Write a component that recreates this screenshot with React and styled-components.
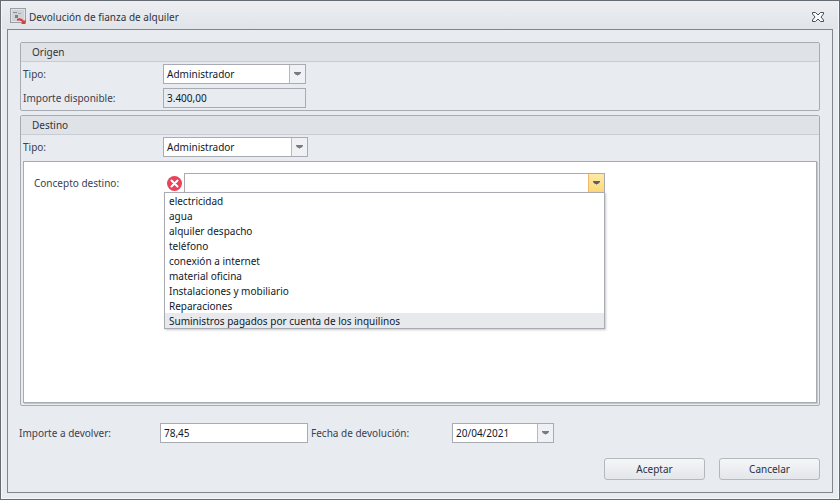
import React from "react";
import styled, { createGlobalStyle } from "styled-components";

const Global = createGlobalStyle`
  html, body { margin: 0; padding: 0; background: #e8ebf0; }
  * { box-sizing: border-box; }
`;

const Win = styled.div`
  width: 840px; height: 500px;
  border: 1px solid #666c73;
  box-shadow: inset 0 0 0 1px #f6f7f9;
  background: #e8ebf0;
  display: flex; flex-direction: column;
  font-family: "Noto Sans", "Liberation Sans", Arial, sans-serif;
  font-size: 10px;
  color: #1b2433;
`;
const TitleBar = styled.div`
  height: 28px; flex: none;
  display: flex; align-items: center;
  padding: 3px 14px 0 8px;
  background: linear-gradient(#eceef2, #e1e4e8);
  margin: 0 1px;
  color: #2f3540;
`;
const TitleText = styled.span`
  margin-left: 2px; flex: 1;
`;
const Frame = styled.div`
  flex: 1; min-height: 0;
  margin: 0 6px 6px;
  border: 1px solid #7f858a;
  padding: 12px 12px 12px;
  display: flex; flex-direction: column;
  background: #e8ebf0;
`;
const Group = styled.section`
  border: 1px solid #a8acb2;
  border-radius: 2px;
  display: flex; flex-direction: column;
  flex: ${p => (p.$grow ? "1" : "none")};
  min-height: 0;
  margin-top: ${p => p.$top || 0}px;
`;
const GroupHead = styled.header`
  height: 19px; flex: none;
  background: #dfe2e7;
  border-bottom: 1px solid #c9ccd2;
  padding-left: 11px;
  line-height: 18px;
  color: #2f3540;
`;
const GroupBody = styled.div`
  flex: 1; min-height: 0;
  padding: 2px 2px;
  display: flex; flex-direction: column;
  gap: 4px;
`;
const Row = styled.div`
  display: flex; align-items: center; height: 20px; flex: none;
`;
const Label = styled.label`
  width: ${p => p.$w}px; flex: none; color: #3a4150;
  margin-left: ${p => p.$left || 0}px;
`;
const Field = styled.div`
  width: ${p => p.$w}px; height: 20px; flex: none;
  border: 1px solid #a8acb2;
  background: ${p => (p.$ro ? "#e8ebf0" : "#fff")};
  display: flex; align-items: stretch;
  color: #10192c;
  position: relative;
`;
const FieldText = styled.span`
  flex: 1; padding-left: 3px; line-height: 18px; white-space: nowrap;
`;
const DropBtn = styled.span`
  width: ${p => p.$w || 16}px; flex: none;
  display: flex; align-items: center; justify-content: center;
  border-left: 1px solid ${p => (p.$hot ? "#f0b765" : "#b6bac0")};
  background: ${p => (p.$hot ? "linear-gradient(#fde9a6, #fdd97a)" : "#eff1f4")};
`;
const Panel = styled.div`
  flex: 1; min-height: 0;
  background: #fff;
  border: 1px solid #a8acb2;
  box-shadow: 1px 1px 0 #c4c7cc;
  padding: 11px 0 0 10px;
`;
const ConceptRow = styled.div`
  display: flex; align-items: center; height: 20px;
`;
const ErrIcon = styled.svg`
  width: 15px; height: 15px; flex: none; margin: 0 2px 0 0;
`;
const Menu = styled.ul`
  position: absolute; left: -21px; top: 18px;
  width: 441px; height: 137px;
  margin: 0; padding: 0;
  list-style: none;
  background: #fff;
  border: 1px solid #a8acb2;
  box-shadow: 1px 1px 2px rgba(90, 95, 105, 0.35);
  z-index: 2;
`;
const MenuItem = styled.li`
  height: 15px; line-height: 14px;
  padding: 1px 0 0 4px;
  color: #10192c;
  background: ${p => (p.$active ? "#e7e9ed" : "transparent")};
`;
const BottomRow = styled.div`
  display: flex; align-items: center; height: 20px; flex: none;
  margin: 17px 0 0 -1px;
`;
const Actions = styled.div`
  display: flex; justify-content: flex-end; gap: 14px;
  margin-top: 15px; flex: none;
`;
const Button = styled.button`
  width: 101px; height: 22px;
  border: 1px solid #b4b8bd;
  border-radius: 3px;
  background: linear-gradient(#f5f6f8, #e3e6ea);
  font: inherit; color: #2a3140; padding: 0;
`;

const Arrow = ({ dark }) => (
  <svg width="7" height="4" viewBox="0 0 7 4">
    <path d="M0 0H7V1L5 3H4L3.500 4L3 3H2L0 1Z" fill={dark ? "#5b6068" : "#777c84"} />
  </svg>
);

const WinIcon = () => (
  <svg width="17" height="17" viewBox="0 0 17 17">
    <rect x="0.5" y="0.5" width="15" height="14" fill="#e2e4e7" stroke="#9a9fa6" />
    <rect x="2" y="2" width="12" height="11" fill="#cfd2d6" />
    <rect x="3" y="4" width="4" height="1" fill="#8a8f96" />
    <rect x="8" y="5" width="3" height="1" fill="#a5a9af" />
    <rect x="5" y="7" width="3" height="3" fill="#7c8087" />
    <path d="M7 11 C9 9.500 12 10 14 13 L15.500 11.500 V16 H11 L12.500 14.500 C11 12.500 9 12 7 13Z" fill="#d83b3b" />
  </svg>
);

const CloseIcon = () => (
  <svg width="12" height="10" viewBox="0 0 12 10">
    <path d="M0.500 0.500H3.500L6 3L8.500 0.500H11.500V2L9 5L11.500 8V9.500H8.500L6 7L3.500 9.500H0.500V8L3 5L0.500 2Z" fill="#fafbfc" stroke="#4a4f57" strokeWidth="1" />
  </svg>
);

const items = [
  "electricidad", "agua", "alquiler despacho", "teléfono", "conexión a internet",
  "material oficina", "Instalaciones y mobiliario", "Reparaciones",
  "Suministros pagados por cuenta de los inquilinos",
];

export default function App() {
  return (
    <Win>
      <Global />
      <TitleBar>
        <WinIcon />
        <TitleText>Devolución de fianza de alquiler</TitleText>
        <CloseIcon />
      </TitleBar>
      <Frame>
        <Group>
          <GroupHead>Origen</GroupHead>
          <GroupBody>
            <Row>
              <Label $w={140}>Tipo:</Label>
              <Field $w={143}><FieldText>Administrador</FieldText><DropBtn><Arrow /></DropBtn></Field>
            </Row>
            <Row>
              <Label $w={140}>Importe disponible:</Label>
              <Field $w={143} $ro><FieldText>3.400,00</FieldText></Field>
            </Row>
          </GroupBody>
        </Group>
        <Group $grow $top={4}>
          <GroupHead>Destino</GroupHead>
          <GroupBody>
            <Row>
              <Label $w={140}>Tipo:</Label>
              <Field $w={145}><FieldText>Administrador</FieldText><DropBtn><Arrow /></DropBtn></Field>
            </Row>
            <Panel>
              <ConceptRow>
                <Label $w={133}>Concepto destino:</Label>
                <ErrIcon viewBox="0 0 15 15">
                  <circle cx="7.500" cy="7.500" r="7.500" fill="#e8435a" />
                  <path d="M4.500 4.500L10.500 10.500M10.500 4.500L4.500 10.500" stroke="#fff" strokeWidth="2" strokeLinecap="round" />
                </ErrIcon>
                <Field $w={421}>
                  <FieldText />
                  <DropBtn $hot><Arrow dark /></DropBtn>
                  <Menu>
                    {items.map((t, i) => (
                      <MenuItem key={t} $active={i === items.length - 1}>{t}</MenuItem>
                    ))}
                  </Menu>
                </Field>
              </ConceptRow>
            </Panel>
          </GroupBody>
        </Group>
        <BottomRow>
          <Label $w={141}>Importe a devolver:</Label>
          <Field $w={148}><FieldText>78,45</FieldText></Field>
          <Label $w={141} $left={3}>Fecha de devolución:</Label>
          <Field $w={102}><FieldText>20/04/2021</FieldText><DropBtn><Arrow /></DropBtn></Field>
        </BottomRow>
        <Actions>
          <Button>Aceptar</Button>
          <Button>Cancelar</Button>
        </Actions>
      </Frame>
    </Win>
  );
}
